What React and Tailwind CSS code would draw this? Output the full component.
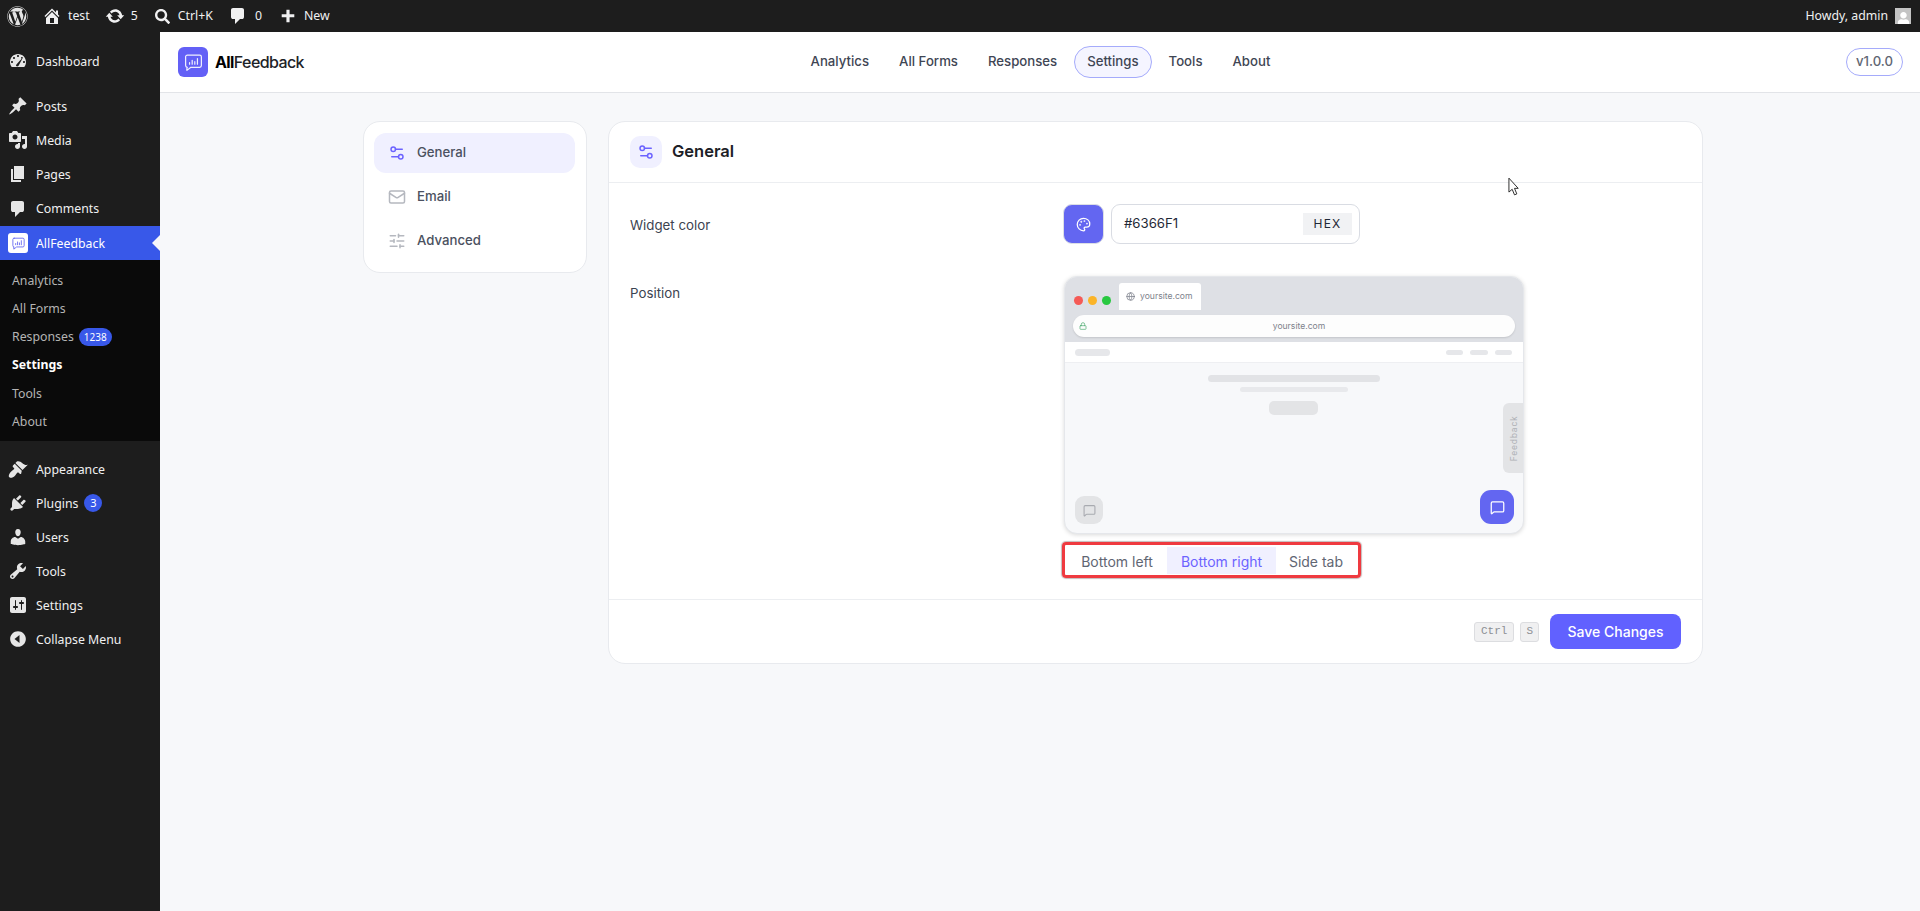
import React from 'react';
import { Settings2, Mail, SlidersHorizontal, Palette, Globe, Lock, MessageSquare } from 'lucide-react';
import { FaWordpress, FaSearch, FaUser } from 'react-icons/fa';

const wpFont = "font-['Noto_Sans',sans-serif]";

// wp-admin menu glyphs, drawn on a 20x20 box
const glyphs = {
  dashboard: 'M3.76 16h12.48c1.1-1.37 1.76-3.11 1.76-5 0-4.42-3.58-8-8-8s-8 3.58-8 8c0 1.89.66 3.63 1.76 5zM10 4c.55 0 1 .45 1 1s-.45 1-1 1-1-.45-1-1 .45-1 1-1zM6 6c.55 0 1 .45 1 1s-.45 1-1 1-1-.45-1-1 .45-1 1-1zm8 0c.55 0 1 .45 1 1s-.45 1-1 1-1-.45-1-1 .45-1 1-1zm-5.37 9.35s-.63-.35-.63-1c0-.55 7-8 7-8s-3.44 7.4-4.65 8.6c-.6.6-1.72.4-1.72.4zM4 10c.55 0 1 .45 1 1s-.45 1-1 1-1-.45-1-1 .45-1 1-1zm12 0c.55 0 1 .45 1 1s-.45 1-1 1-1-.45-1-1 .45-1 1-1z',
  post: 'M10.44 3.02l1.82-1.82 6.36 6.35-1.83 1.82c-1.05-.68-2.48-.57-3.41.36l-.75.75c-.92.93-1.04 2.35-.35 3.41l-1.83 1.82-2.41-2.41-2.8 2.79c-.42.42-3.38 2.71-3.8 2.29s1.86-3.39 2.28-3.81l2.79-2.79L4.1 9.36l1.83-1.82c1.05.69 2.48.57 3.4-.36l.75-.75c.93-.92 1.05-2.35.36-3.41z',
  media: 'M13 11V4c0-.55-.45-1-1-1h-1.67L9 1H5L3.67 3H2c-.55 0-1 .45-1 1v7c0 .55.45 1 1 1h10c.55 0 1-.45 1-1zM7 4.5c1.38 0 2.5 1.12 2.5 2.5S8.38 9.5 7 9.5 4.5 8.38 4.5 7 5.62 4.5 7 4.5zM14 6h5v10.5c0 1.38-1.12 2.5-2.5 2.5S14 17.88 14 16.5s1.12-2.5 2.5-2.5c.17 0 .34.02.5.05V9h-3V6zm-4 8.05V13h2v3.5c0 1.38-1.12 2.5-2.5 2.5S7 17.88 7 16.5 8.12 14 9.5 14c.17 0 .34.02.5.05z',
  page: 'M6 15V2h10v13H6zm-1 1h8v2H3V5h2v11z',
  comment: 'M5 2h9q.82 0 1.41.59T16 4v7q0 .82-.59 1.41T14 13h-2l-5 5v-5H5q-.82 0-1.41-.59T3 11V4q0-.82.59-1.41T5 2z',
  appearance: 'M14.48 11.06L7.41 3.99l1.5-1.5c.5-.56 2.3-.47 3.51.32 1.21.8 1.43 1.28 2.91 2.1 1.18.64 2.45 1.26 4.45.85zm-.71.71L6.7 4.7 4.93 6.47c-.39.39-.39 1.02 0 1.41l1.06 1.06c.39.39.39 1.03 0 1.42-.6.6-1.43 1.11-2.21 1.69-.35.26-.7.53-1.01.84-1.34 1.35-2.77 4-1.39 5.38 1.38 1.38 4.03-.05 5.35-1.37.31-.31.58-.66.84-1.01.58-.78 1.09-1.61 1.69-2.21.39-.39 1.03-.39 1.42 0l1.06 1.06c.39.39 1.02.39 1.41 0z',
  plugin: 'M13.11 4.36L9.87 7.6 8 5.73l3.24-3.24c.35-.34 1.05-.2 1.56.32.52.51.66 1.21.31 1.55zm-8 1.77l.91-1.12 9.01 9.01-1.19.84c-.71.71-2.63 1.16-3.82 1.16H6.14L4.9 17.26c-.59.59-1.54.59-2.12 0-.59-.58-.59-1.53 0-2.12l1.24-1.24v-3.88c0-1.13.4-3.19 1.09-3.89zm7.26 3.97l3.24-3.24c.34-.35 1.04-.21 1.55.31.52.51.66 1.21.31 1.55l-3.24 3.25z',
  users: 'M10 9.25c-2.27 0-2.73-3.44-2.73-3.44C7 4.02 7.82 2 9.97 2c2.16 0 2.98 2.02 2.71 3.81 0 0-.41 3.44-2.68 3.44zm0 2.57L12.72 10c2.39 0 4.52 2.33 4.52 4.53v2.49s-3.65 1.13-7.24 1.13c-3.65 0-7.24-1.13-7.24-1.13v-2.49c0-2.25 1.94-4.48 4.47-4.48z',
  tools: 'M16.68 9.77c-1.34 1.34-3.3 1.67-4.95.99l-5.41 6.52c-.99.99-2.59.99-3.58 0s-.99-2.59 0-3.57l6.52-5.42c-.68-1.65-.35-3.61.99-4.95 1.28-1.28 3.12-1.62 4.72-1.06l-2.89 2.89 2.82 2.82 2.86-2.87c.53 1.58.18 3.39-1.08 4.65zM3.81 16.21c.4.39 1.04.39 1.43 0 .4-.4.4-1.04 0-1.43-.39-.4-1.03-.4-1.43 0-.39.39-.39 1.03 0 1.43z',
  settings: 'M18 16V4c0-1.1-.9-2-2-2H4c-1.1 0-2 .9-2 2v12c0 1.1.9 2 2 2h12c1.1 0 2-.9 2-2zM8 11h1c.55 0 1 .45 1 1s-.45 1-1 1H8v1.5c0 .28-.22.5-.5.5s-.5-.22-.5-.5V13H6c-.55 0-1-.45-1-1s.45-1 1-1h1V5.5c0-.28.22-.5.5-.5s.5.22.5.5V11zm5-2h-1c-.55 0-1-.45-1-1s.45-1 1-1h1V5.5c0-.28.22-.5.5-.5s.5.22.5.5V7h1c.55 0 1 .45 1 1s-.45 1-1 1h-1v5.5c0 .28-.22.5-.5.5s-.5-.22-.5-.5V9z',
  collapse: 'M10 2.16c4.33 0 7.84 3.51 7.84 7.84s-3.51 7.84-7.84 7.84S2.16 14.33 2.16 10 5.67 2.16 10 2.16zM11.5 14V6l-5 4z',
  home: 'M16 8.5l1.53 1.53-1.06 1.06L10 4.62l-6.47 6.47-1.06-1.06L10 2.5l4 4v-2h2v4zm-6-2.46l6 5.99V18H4v-5.97zM12 17v-5H8v5h4z',
  update: 'M10.2 3.28c3.53 0 6.43 2.61 6.92 6h2.08l-3.5 4-3.5-4h2.32c-.45-1.97-2.21-3.44-4.32-3.44-1.45 0-2.73.71-3.54 1.78L4.95 5.66C6.23 4.2 8.11 3.28 10.2 3.28zm-.4 13.44c-3.52 0-6.43-2.61-6.92-6H.8l3.5-4c1.17 1.33 2.33 2.67 3.5 4H5.48c.45 1.97 2.21 3.44 4.32 3.44 1.45 0 2.73-.71 3.54-1.78l1.71 1.95c-1.28 1.46-3.15 2.39-5.25 2.39z',
  plus: 'M17 8v3.5h-5.25V17h-3.5v-5.5H3V8h5.25V3h3.5v5H17z',
};

function Glyph({ name, className }) {
  return (
    <svg viewBox="0 0 20 20" fill="currentColor" fillRule="evenodd" className={className}>
      <path d={glyphs[name]} />
    </svg>
  );
}

function Logo({ className }) {
  return (
    <svg viewBox="0 0 24 24" fill="none" stroke="currentColor" strokeWidth="1.4" strokeLinecap="round" strokeLinejoin="round" className={className}>
      <path d="M5 3.5h14a2 2 0 0 1 2 2v10a2 2 0 0 1-2 2H9l-4.5 3.5V17.5H5a2 2 0 0 1-2-2v-10a2 2 0 0 1 2-2z" />
      <path d="M7.5 14v-2M10.5 14V9.5M13.5 14v-3M16.5 14V7.5" />
    </svg>
  );
}

function AdminBar() {
  return (
    <div className={`h-8 bg-[#1d1d1d] flex items-center text-[12.3px] text-[#f0f0f1] ${wpFont}`}>
      <FaWordpress className="ml-[7px] w-[21px] h-[21px] text-[#e4e4e4]" />
      <Glyph name="home" className="ml-[14px] w-5 h-5" />
      <span className="ml-[6px]">test</span>
      <Glyph name="update" className="ml-[15px] w-5 h-5" />
      <span className="ml-[6px]">5</span>
      <FaSearch className="ml-[17px] w-[15px] h-[15px]" />
      <span className="ml-[8px]">Ctrl+K</span>
      <Glyph name="comment" className="ml-[15px] w-5 h-5" />
      <span className="ml-[7px]">0</span>
      <Glyph name="plus" className="ml-[17px] w-[18px] h-[18px]" />
      <span className="ml-[7px]">New</span>
      <span className="ml-auto">Howdy, admin</span>
      <div className="ml-[7px] mr-[9px] w-4 h-4 bg-[#c4c4c4] flex items-end justify-center overflow-hidden">
        <FaUser className="w-[13px] h-[13px] text-white -mb-[1px]" />
      </div>
    </div>
  );
}

function MenuRow({ icon, label, badge, active, h = 'h-[34px]' }) {
  return (
    <div className={`relative flex items-center ${h} ${active ? 'bg-[#3858e9] text-white' : 'text-[#f0f0f1]'}`}>
      <span className="w-9 flex justify-center shrink-0">
        {active ? (
          <span className="w-5 h-5 rounded-[3px] bg-white flex items-center justify-center text-[#6366f1]">
            <Logo className="w-[15px] h-[15px]" />
          </span>
        ) : (
          <Glyph name={icon} className="w-5 h-5 text-[#e6e6e6]" />
        )}
      </span>
      <span className="pt-[2px]">{label}</span>
      {badge && (
        <span className="ml-[6px] w-[18px] h-[18px] rounded-full bg-[#3858e9] text-white text-[11px] flex items-center justify-center">{badge}</span>
      )}
      {active && (
        <span className="absolute right-0 top-1/2 -translate-y-1/2 border-y-[8px] border-y-transparent border-r-[8px] border-r-[#f7f8fa]" />
      )}
    </div>
  );
}

const subItems = ['Analytics', 'All Forms', 'Responses', 'Settings', 'Tools', 'About'];

function Sidebar() {
  return (
    <aside className={`w-40 shrink-0 bg-[#1d1d1d] pt-3 text-[12.3px] ${wpFont}`}>
      <MenuRow icon="dashboard" label="Dashboard" />
      <div className="h-[11px]" />
      <MenuRow icon="post" label="Posts" />
      <MenuRow icon="media" label="Media" />
      <MenuRow icon="page" label="Pages" />
      <MenuRow icon="comment" label="Comments" h="h-[35px]" />
      <MenuRow label="AllFeedback" active />
      <div className="bg-[#0a0a0a] h-[181px] pt-[7px] pl-3">
        {subItems.map((s) => (
          <div key={s} className={`h-[28.2px] flex items-center ${s === 'Settings' ? 'text-white font-bold' : 'text-[#b4b4b4]'}`}>
            {s}
            {s === 'Responses' && (
              <span className="ml-[5px] h-[18px] px-[5px] rounded-full bg-[#3858e9] text-white text-[10px] flex items-center">1238</span>
            )}
          </div>
        ))}
      </div>
      <div className="h-[11px]" />
      <MenuRow icon="appearance" label="Appearance" />
      <MenuRow icon="plugin" label="Plugins" badge="3" />
      <MenuRow icon="users" label="Users" />
      <MenuRow icon="tools" label="Tools" />
      <MenuRow icon="settings" label="Settings" />
      <MenuRow icon="collapse" label="Collapse Menu" />
    </aside>
  );
}

const navItems = ['Analytics', 'All Forms', 'Responses', 'Settings', 'Tools', 'About'];

function TopNav() {
  return (
    <header className="h-[61px] bg-white border-b border-[#e2e4e8] grid grid-cols-[1fr_auto_1fr] items-center pl-[18px] pr-[17px]">
      <div className="flex items-center gap-[7px]">
        <div className="w-[30px] h-[30px] rounded-[6px] bg-[#6360f6] text-white flex items-center justify-center">
          <Logo className="w-[21px] h-[21px] opacity-90" />
        </div>
        <span className="text-[16px] tracking-[-0.6px] text-[#1d2327] font-medium"><b className="font-bold text-black">All</b>Feedback</span>
      </div>
      <nav className="flex items-center gap-1">
        {navItems.map((n) => (
          <span key={n} className={`h-8 px-[12px] flex items-center rounded-full text-[13.2px] font-medium text-[#3f4654] border ${n === 'Settings' ? 'border-[#a5abfb] bg-[#f5f5ff]' : 'border-transparent'}`}>{n}</span>
        ))}
      </nav>
      <div className="flex justify-end">
        <span className="h-7 w-[57px] rounded-full border border-[#a5abfb] flex items-center justify-center text-[13.2px] font-medium text-[#5f6673]">v1.0.0</span>
      </div>
    </header>
  );
}

function SideNav() {
  const cls = 'h-10 rounded-xl flex items-center gap-[11px] pl-[14px] text-[13.2px] font-medium text-[#4b5160]';
  return (
    <div className="w-[224px] h-[152px] bg-white border border-[#e8eaee] rounded-[17px] pt-[11px] pl-[10px] pr-[11px] flex flex-col gap-1">
      <div className={`${cls} bg-[#f0f0ff]`}><Settings2 className="w-[18px] h-[18px] text-[#6c63ff]" />General</div>
      <div className={cls}><Mail className="w-[18px] h-[18px] text-[#b5b8bf]" />Email</div>
      <div className={cls}><SlidersHorizontal className="w-[18px] h-[18px] text-[#b5b8bf]" />Advanced</div>
    </div>
  );
}

function Preview() {
  return (
    <div className="relative w-[460px] h-[258px] rounded-[13px] overflow-hidden bg-[#f7f8fa] shadow-[0_1px_4px_rgba(0,0,0,0.15)] border border-[#e5e7eb]">
      <div className="h-[65px] bg-[#dee0e5] px-2">
        <div className="flex h-[33px] items-end">
          <div className="flex items-center gap-[5px] mb-[5px] ml-[1px]">
            <span className="w-[9px] h-[9px] rounded-full bg-[#f55a56]" />
            <span className="w-[9px] h-[9px] rounded-full bg-[#fbb428]" />
            <span className="w-[9px] h-[9px] rounded-full bg-[#28c840]" />
          </div>
          <div className="ml-2 w-[82px] h-[27px] bg-white rounded-t-[3px] flex items-center gap-[5px] pl-[7px] text-[8.6px] text-[#7d828c]">
            <Globe className="w-[9px] h-[9px]" />yoursite.com
          </div>
        </div>
        <div className="mt-[5px] h-[22px] pl-[10px] rounded-full bg-[#fdfdfd] shadow-[0_1px_2px_rgba(0,0,0,0.12)] relative flex items-center justify-center text-[8.6px] text-[#7d828c]">
          <Lock className="absolute left-[6px] w-[8px] h-[8px] text-[#46a86a]" />yoursite.com
        </div>
      </div>
      <div className="h-[21px] bg-white border-b border-[#eeeff2] flex items-center pl-[10px] pr-[11px] gap-[7px]">
        <span className="w-[35px] h-[7px] rounded-full bg-[#e6e7ea] mr-auto" />
        <span className="w-[17px] h-[5px] rounded-full bg-[#e6e7ea]" />
        <span className="w-[18px] h-[5px] rounded-full bg-[#e6e7ea]" />
        <span className="w-[17px] h-[5px] rounded-full bg-[#e6e7ea]" />
      </div>
      <div className="flex flex-col items-center pt-3 pr-[1px]">
        <span className="w-[172px] h-[7px] rounded-full bg-[#e2e3e6]" />
        <span className="mt-[5px] w-[108px] h-[5px] rounded-full bg-[#e8e9ec]" />
        <span className="mt-[9px] w-[49px] h-[14px] rounded-[5px] bg-[#e3e4e6]" />
      </div>
      <div className="absolute right-0 top-[126px] w-[20px] h-[70px] bg-[#e3e4e6] rounded-l-[6px] flex items-center justify-center pl-[2px]">
        <span className="-rotate-90 text-[8.5px] tracking-[0.8px] text-[#aeb0b5]">Feedback</span>
      </div>
      <div className="absolute left-[10px] bottom-[9px] w-[28px] h-[28px] rounded-[9px] bg-[#e3e4e6] flex items-center justify-center">
        <MessageSquare className="w-[13px] h-[13px] text-[#a8aab0]" />
      </div>
      <div className="absolute right-[9px] bottom-[9px] w-[34px] h-[34px] rounded-[11px] bg-[#6366f1] flex items-center justify-center">
        <MessageSquare className="w-[15px] h-[15px] text-white" />
      </div>
    </div>
  );
}

function SettingsCard() {
  return (
    <div className="relative w-[1095px] h-[543px] bg-white border border-[#e8eaee] rounded-[17px] flex flex-col">
      <div className="h-[61px] border-b border-[#eceef1] flex items-center gap-[10px] pl-[21px]">
        <div className="w-8 h-8 rounded-[10px] bg-[#f0f0ff] flex items-center justify-center">
          <Settings2 className="w-[18px] h-[18px] text-[#6c63ff]" />
        </div>
        <span className="text-[16.5px] font-semibold text-[#1d2127] pb-[1px]">General</span>
      </div>
      <div className="flex-1 flex pl-[21px] pt-[21px] text-[14px] text-[#3c4350]">
        <div className="w-[434px] shrink-0 text-[13.3px]">
          <div className="h-10 flex items-center pt-[3px]">Widget color</div>
          <div className="mt-[38px] h-[22px] flex items-center pt-[1px]">Position</div>
        </div>
        <div>
          <div className="flex gap-[7px] -ml-[1px]">
            <div className="w-[41px] h-10 rounded-[9px] bg-[#6366f1] border border-[#dcdfe6] flex items-center justify-center">
              <Palette className="w-[15px] h-[15px] text-white" />
            </div>
            <div className="w-[249px] h-10 rounded-[9px] border border-[#d9dce3] flex items-center justify-between pl-[12px] pr-[7px] text-[13.2px] text-[#1f2937]">
              #6366F1
              <span className="w-[49px] h-[22px] bg-[#f1f2f4] flex items-center justify-center text-[12px] tracking-[1.2px]">HEX</span>
            </div>
          </div>
          <div className="mt-[32px]"><Preview /></div>
          <div className="mt-[8px] -ml-[2px] w-[299px] h-[36px] rounded-[4px] border-[3px] border-[#ef3a40] shadow-[0_0_1px_1px_rgba(90,60,60,0.35)] flex items-center px-[2px] text-[#5f6673]">
            <span className="w-[100px] h-[27px] pt-[2px] flex items-center justify-center">Bottom left</span>
            <span className="w-[109px] h-[27px] pt-[2px] flex items-center justify-center bg-[#f0f0ff] text-[#6c63ff]">Bottom right</span>
            <span className="w-[80px] h-[27px] pt-[2px] flex items-center justify-center">Side tab</span>
          </div>
        </div>
      </div>
      <div className="h-[64px] border-t border-[#eceef1] flex items-center justify-end gap-[6px] pr-[21px]">
        <span className="h-5 px-[6px] rounded-[3px] border border-[#dcdde0] bg-[#f0f0f1] text-[11px] text-[#8c8f94] font-['Liberation_Mono',monospace] flex items-center">Ctrl</span>
        <span className="h-5 px-[5px] rounded-[3px] border border-[#dcdde0] bg-[#f0f0f1] text-[11px] text-[#8c8f94] font-['Liberation_Mono',monospace] flex items-center">S</span>
        <button className="ml-[5px] w-[131px] h-[35px] rounded-lg bg-[#6161ff] text-white text-[14px] font-medium">Save Changes</button>
      </div>
    </div>
  );
}

function Cursor() {
  return (
    <svg viewBox="0 0 14 20" className="absolute left-[1508px] top-[177px] w-[13px] h-[19px]" fill="white" stroke="#222" strokeWidth="1">
      <path d="M1 1v15l3.5-3 2.5 6 2.5-1-2.5-6H11z" />
    </svg>
  );
}

export default function App() {
  return (
    <div className="relative min-h-screen h-[911px] overflow-hidden flex flex-col bg-[#f7f8fa] font-['Inter',sans-serif]">
      <AdminBar />
      <div className="flex flex-1">
        <Sidebar />
        <main className="flex-1">
          <TopNav />
          <div className="pl-[203px] pt-[28px] flex items-start gap-[21px]">
            <SideNav />
            <SettingsCard />
          </div>
        </main>
      </div>
      <Cursor />
    </div>
  );
}
